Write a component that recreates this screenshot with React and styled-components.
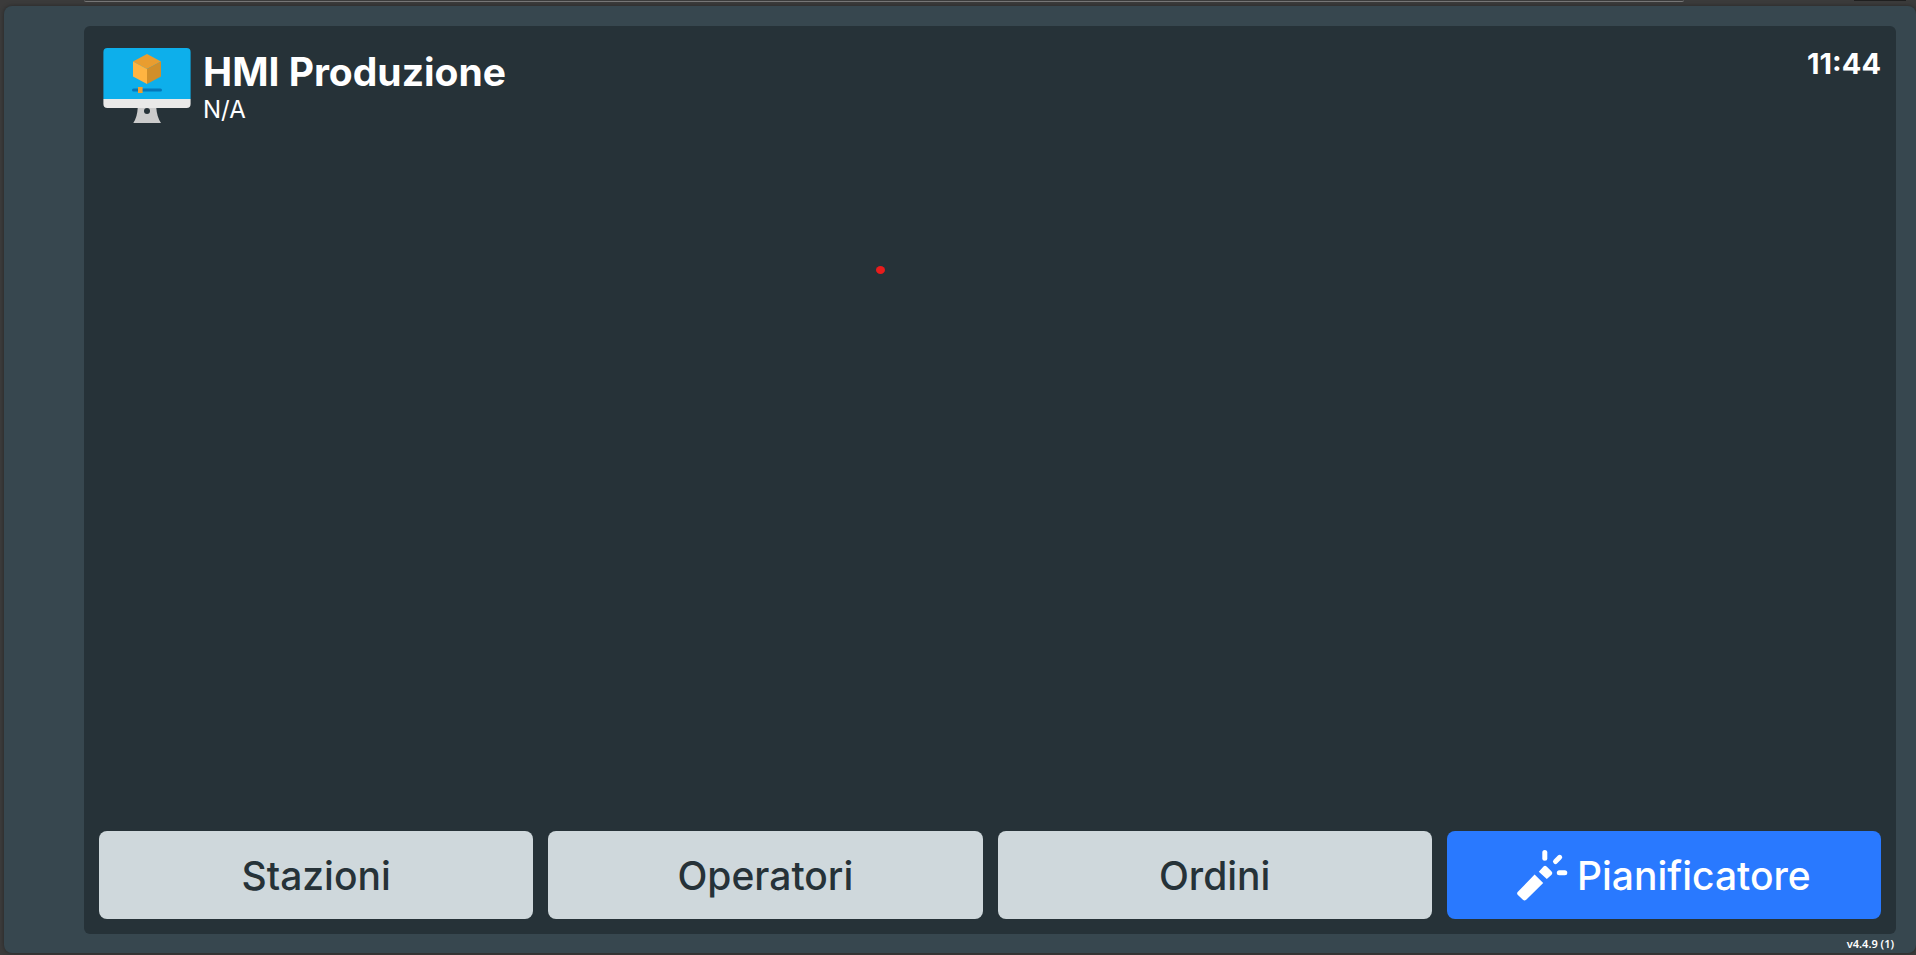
import styled, { createGlobalStyle } from 'styled-components';

const GlobalStyle = createGlobalStyle`
  * {
    box-sizing: border-box;
  }

  body {
    margin: 0;
    background-color: #3b3b3b;
    color: #ffffff;
    font-family: Inter, 'Liberation Sans', sans-serif;
  }
`;

const Frame = styled.div`
  display: flex;
  flex-direction: column;
  min-height: 100vh;
  padding: 0 0 2px 4px;
`;

const TopStrip = styled.div`
  display: flex;
  justify-content: space-between;
  height: 6px;
  padding: 0 10px 0 80px;
`;

const AddressEdge = styled.div`
  flex: 1;
  height: 2px;
  margin-right: 170px;
  border-bottom: 1px solid #777777;
  border-radius: 0 0 4px 4px;
`;

const TabEdge = styled.div`
  width: 52px;
  height: 1px;
  background-color: #1f1f1f;
`;

const Shell = styled.div`
  flex: 1;
  display: flex;
  flex-direction: column;
  padding: 20px 20px 0 80px;
  border-radius: 8px;
  background-color: #37474f;
  box-shadow: 0 0 4px rgba(0, 0, 0, 0.35);
`;

const Panel = styled.main`
  position: relative;
  flex: 1;
  display: flex;
  flex-direction: column;
  justify-content: space-between;
  padding: 15px;
  border-radius: 6px;
  background-color: #263238;
`;

const Header = styled.header`
  display: flex;
  align-items: flex-start;
  padding: 7px 0 0 4px;
`;

const Heading = styled.div`
  flex: 1;
  margin-left: 12px;
`;

const Title = styled.h1`
  margin: 0;
  font-size: 39px;
  font-weight: 700;
  line-height: 48px;
`;

const Subtitle = styled.p`
  margin: 0;
  font-size: 24px;
  line-height: 28px;
`;

const Clock = styled.time`
  font-size: 29px;
  font-weight: 700;
  line-height: 32px;
`;

const Pointer = styled.span`
  position: absolute;
  top: 240px;
  left: 792px;
  width: 9px;
  height: 8px;
  border-radius: 50%;
  background-color: #e81c1c;
`;

const Actions = styled.nav`
  display: grid;
  grid-template-columns: repeat(4, 1fr);
  gap: 15px;
`;

const ActionButton = styled.button`
  display: flex;
  align-items: center;
  justify-content: center;
  gap: 9px;
  height: 88px;
  padding: 0;
  border: 0;
  border-radius: 8px;
  background-color: ${({ $primary }) => ($primary ? '#2979ff' : '#cfd8dc')};
  color: ${({ $primary }) => ($primary ? '#ffffff' : '#263238')};
  font-family: inherit;
  font-size: 39px;
  font-weight: 500;
  cursor: pointer;
`;

const Footer = styled.footer`
  padding-right: 2px;
  font-family: 'Noto Sans', sans-serif;
  font-size: 11px;
  font-weight: 600;
  line-height: 19px;
  text-align: right;
`;

const MonitorIcon = () => (
  <svg width="88" height="75" viewBox="0 0 88 75" aria-hidden="true">
    <path d="M34.7 60h18.6q.6 9 4.7 15H30.3q4-6 4.4-15z" fill="#cbcbcb" />
    <circle cx="44" cy="63" r="3" fill="#263238" />
    <path d="M.4 51h87.2v5a4 4 0 0 1-4 4H4.4a4 4 0 0 1-4-4z" fill="#e9e9e8" />
    <path d="M4.4 0h79.2a4 4 0 0 1 4 4v47H.4V4a4 4 0 0 1 4-4z" fill="#0dafeb" />
    <path d="M44 6l14 7.5L44 21l-14-7.5z" fill="#e99d2f" />
    <path d="M30 13.5L44 21v15l-14-7.5z" fill="#ffb441" />
    <path d="M58 13.5L44 21v15l14-7.5z" fill="#d18f2a" />
    <rect x="29" y="40.5" width="30" height="3" rx="1.5" fill="#0577b9" />
    <rect x="35" y="39" width="4.6" height="6" fill="#f29f2c" />
  </svg>
);

const WandIcon = () => (
  <svg width="51" height="51" viewBox="0 0 51 51" fill="#ffffff" aria-hidden="true">
    <path d="M17.6 24.6l8.6 8.3L9.2 49.8q-1.7 1.5-3.3 0L.9 45q-1.6-1.6 0-3.2z" />
    <path d="M21.8 21.8l4.7-5.2q1.5-1.6 3.1 0l5 4.9q1.6 1.6 0 3.2L29.8 29z" />
    <g fill="none" stroke="#ffffff" strokeWidth="5" strokeLinecap="round">
      <path d="M27.8 2.6v5.6" />
      <path d="M42.7 7.3l-4.2 4.2" />
      <path d="M42.3 22.7h5.5" />
    </g>
  </svg>
);

const actions = [
  { label: 'Stazioni' },
  { label: 'Operatori' },
  { label: 'Ordini' },
  { label: 'Pianificatore', icon: <WandIcon />, primary: true },
];

const App = () => {
  return (
    <>
      <GlobalStyle />
      <Frame>
        <TopStrip>
          <AddressEdge />
          <TabEdge />
        </TopStrip>
        <Shell>
          <Panel>
            <Header>
              <MonitorIcon />
              <Heading>
                <Title>HMI Produzione</Title>
                <Subtitle>N/A</Subtitle>
              </Heading>
              <Clock>11:44</Clock>
            </Header>

            <Pointer />

            <Actions>
              {actions.map(({ label, icon, primary }) => (
                <ActionButton key={label} type="button" $primary={primary}>
                  {icon}
                  {label}
                </ActionButton>
              ))}
            </Actions>
          </Panel>
          <Footer>v4.4.9 (1)</Footer>
        </Shell>
      </Frame>
    </>
  );
};

export default App;
